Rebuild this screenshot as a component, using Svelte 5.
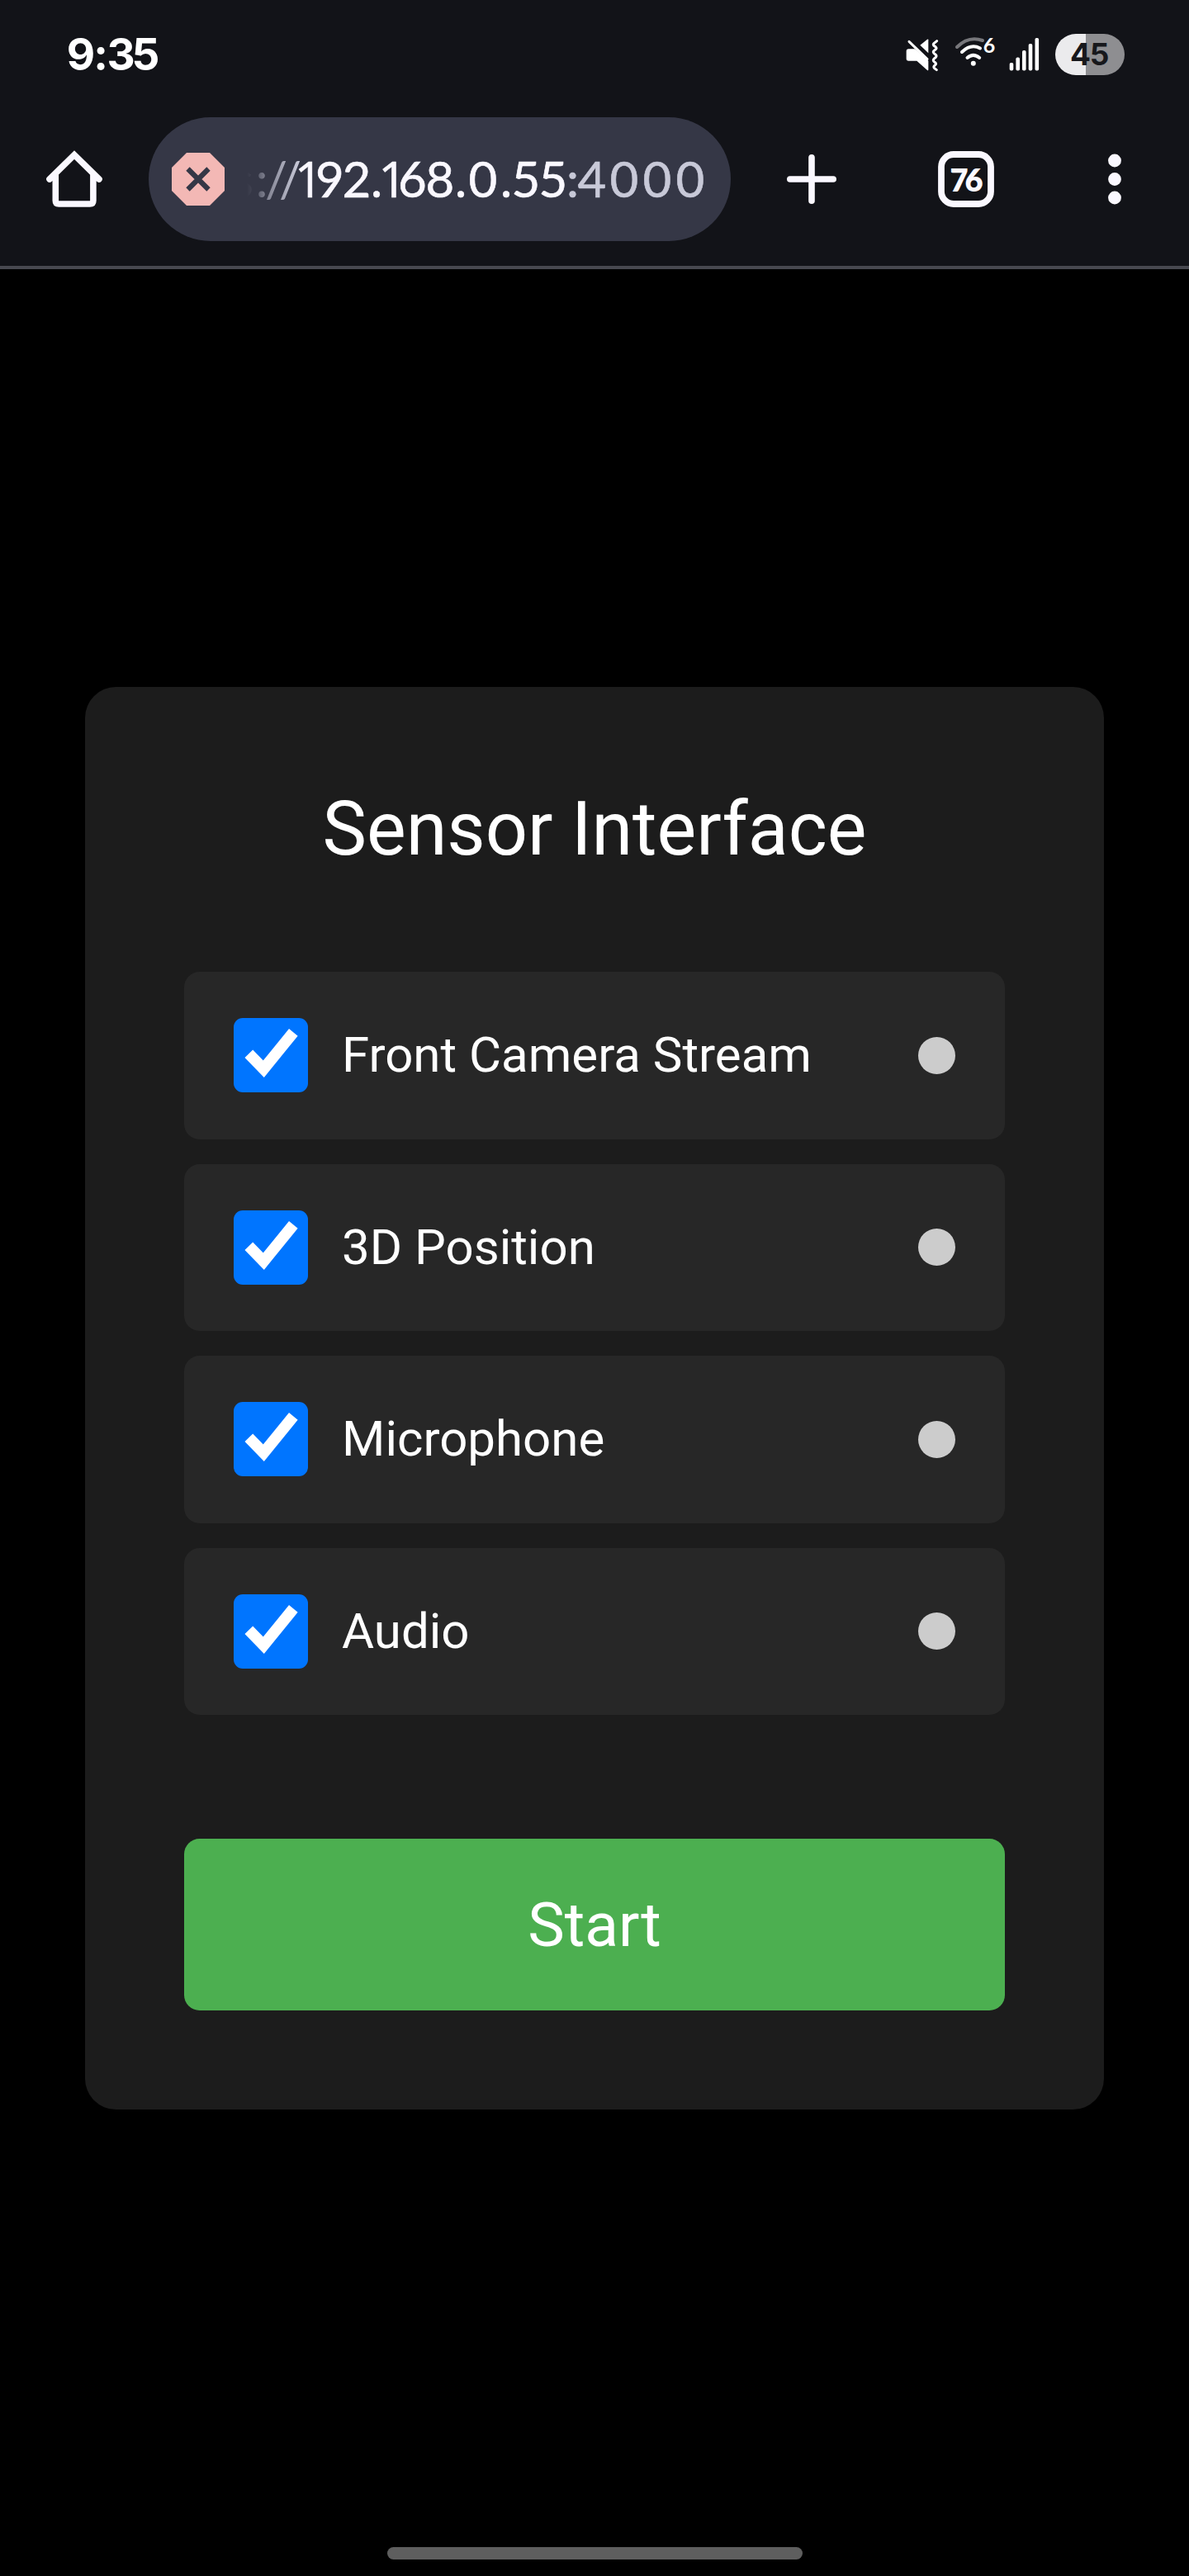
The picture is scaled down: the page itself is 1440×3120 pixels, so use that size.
<script>
  const sensors = ['Front Camera Stream', '3D Position', 'Microphone', 'Audio'];
  const signalBars = [
    { x: 3, top: 35 },
    { x: 10.7, top: 28.5 },
    { x: 18.3, top: 20 },
    { x: 26, top: 12 },
    { x: 33.8, top: 5 }
  ];
</script>

<div class="screen">
  <header>
    <div class="status">
      <svg class="clock" width="120" height="60" viewBox="76 36 120 60">
        <text x="98 122 146.5 176.5" y="85.3">9:35</text>
      </svg>
      <div class="indicators">
        <svg class="mute" width="40" height="42" viewBox="52 44 120 126">
          <path d="M62 87H84L92 92L134 130V162Q134 167 130 164L92 130H62Q54 130 54 122V95Q54 87 62 87Z" fill="#fff" />
          <path d="M104 73L130 52Q134 50 134 54V102Z" fill="#fff" />
          <path d="M64 60L130 124" class="line" />
          <path d="M165 58L154 67Q150 71 154 75L161 80Q165 84 161 88L154 94Q150 98 154 102L161 108Q165 112 161 117L154 123Q150 128 154 132L160 137Q164 141 159 145L155 149Q152 153 156 157L164 163" class="line" />
        </svg>
        <svg class="wifi" width="50" height="42" viewBox="1156 42 50 42">
          <path d="M1159 57Q1173 43 1190 49" stroke="#77777b" class="arc" />
          <path d="M1165 63Q1176 52.5 1187 58.5" stroke="#fff" class="arc" />
          <path d="M1171.5 70Q1178.8 63.6 1186.2 70" stroke="#fff" class="arc" />
          <circle cx="1178.8" cy="76.8" r="3" fill="#fff" />
          <text x="1198" y="64.3">6</text>
        </svg>
        <svg class="signal" width="38" height="42" viewBox="0 3 38 42">
          {#each signalBars as bar}
            <rect x={bar.x - 2.3} y={bar.top} width="4.6" height={44.5 - bar.top} rx="1.8" fill="#fff" />
          {/each}
        </svg>
        <div class="battery">
          <svg width="84" height="50" viewBox="1278 41 84 50">
            <text x="1308.5 1331.5" y="79.4">45</text>
          </svg>
        </div>
      </div>
    </div>

    <div class="toolbar">
      <svg class="home" width="72" height="72" viewBox="54 181 72 72">
        <path d="M60 217L90 187.5L120 217M67.3 212V243Q67.3 247 71.3 247H108.9Q112.9 247 112.9 243V212" fill="none" stroke="#faf8ff" stroke-width="7.6" stroke-linecap="round" />
      </svg>
      <div class="address">
        <svg width="705" height="150" viewBox="180 142 705 150">
          <defs>
            <linearGradient id="fade" gradientUnits="userSpaceOnUse" x1="299" y1="0" x2="362" y2="0">
              <stop offset="0" stop-color="#c8c9d8" stop-opacity="0" />
              <stop offset="0.12" stop-color="#c8c9d8" stop-opacity="0.1" />
              <stop offset="0.35" stop-color="#c8c9d8" stop-opacity="0.5" />
              <stop offset="1" stop-color="#c8c9d8" />
            </linearGradient>
          </defs>
          <path d="M226 185H254L272 203V231L254 249H226L208 231V203Z" fill="#f3b8b5" />
          <path d="M227.5 204.5L252.5 229.5M252.5 204.5L227.5 229.5" stroke="#353746" stroke-width="6.2" />
          <text y="239"><tspan fill="url(#fade)" x="294 317 334.5 351.5">s://</tspan><tspan class="host one" x="374">1</tspan><tspan class="host" x="399.5 432 456">92.</tspan><tspan class="host one" x="475.5">1</tspan><tspan class="host" x="499.5 533 558 585 613 637 670">68.0.55</tspan><tspan class="port" x="693.5 717 756 796 836">:4000</tspan></text>
        </svg>
      </div>
      <svg class="plus" width="68" height="68" viewBox="0 0 68 68">
        <path d="M34 7.8V60.2M7.8 34H60.2" stroke="#faf8ff" stroke-width="7.6" stroke-linecap="round" />
      </svg>
      <svg class="tabs" width="68" height="68" viewBox="1136 183 68 68">
        <rect x="1140" y="187" width="60" height="60" rx="15" fill="none" stroke="#faf8ff" stroke-width="7.8" />
        <text x="1161.5 1179.5" y="231.5">76</text>
      </svg>
      <svg class="menu" width="20" height="68" viewBox="0 0 20 68">
        <circle cx="10" cy="11.5" r="7.9" />
        <circle cx="10" cy="34" r="7.9" />
        <circle cx="10" cy="56.5" r="7.9" />
      </svg>
    </div>
  </header>

  <main>
    <section class="card">
      <h1>Sensor Interface</h1>
      <div class="list">
        {#each sensors as name}
          <label class="row">
            <span class="check">
              <svg width="90" height="90" viewBox="0 0 270 270">
                <path d="M55 130L109 185L217 52" fill="none" stroke="#fff" stroke-width="41" />
              </svg>
            </span>
            <span class="name">{name}</span>
            <span class="dot"></span>
          </label>
        {/each}
      </div>
      <button>Start</button>
    </section>
  </main>

  <footer><div class="handle"></div></footer>
</div>

<style>
  :global(body) {
    margin: 0;
    background: #000;
  }
  .screen {
    width: 1440px;
    height: 3120px;
    display: flex;
    flex-direction: column;
    background: #000;
    color: #fff;
    font-family: Roboto, sans-serif;
    overflow: hidden;
  }
  svg {
    display: block;
    flex: none;
    overflow: visible;
  }
  svg text {
    text-anchor: middle;
  }
  header {
    box-sizing: border-box;
    height: 326px;
    background: #121318;
    border-bottom: 4px solid #47484f;
  }
  .status {
    box-sizing: border-box;
    height: 142px;
    padding: 36px 78px 0 76px;
    display: flex;
    justify-content: space-between;
    align-items: flex-start;
  }
  .clock text {
    font: 700 53px Inter, sans-serif;
    fill: #fff;
  }
  .indicators {
    display: flex;
    height: 60px;
    align-items: center;
  }
  .mute {
    margin-right: 19px;
  }
  .wifi {
    margin: 0 16px 6px 0;
  }
  .wifi text {
    font: 700 25px Lato, sans-serif;
    fill: #fff;
  }
  .signal {
    margin: 0 18px 2px 0;
  }
  .line {
    fill: none;
    stroke: #fff;
    stroke-width: 9;
    stroke-linecap: round;
  }
  .arc {
    fill: none;
    stroke-width: 4;
    stroke-linecap: round;
  }
  .battery {
    width: 84px;
    height: 50px;
    border-radius: 25px;
    background: linear-gradient(90deg, #ebebed 37.5px, #8e8e91 37.5px);
  }
  .battery text {
    font: 700 37px Inter, sans-serif;
    fill: #17181c;
  }
  .toolbar {
    height: 150px;
    padding-left: 54px;
    display: flex;
    align-items: center;
  }
  .address {
    margin: 0 64px 0 54px;
    width: 705px;
    height: 150px;
    border-radius: 75px;
    background: #353746;
  }
  .address text {
    font: 400 60px Lato, sans-serif;
  }
  .host {
    fill: #faf8ff;
    stroke: #faf8ff;
    stroke-width: 0.6;
  }
  .one {
    font-family: 'Open Sans', sans-serif;
  }
  .port {
    fill: #c8c9d8;
    stroke: #c8c9d8;
    stroke-width: 0.6;
  }
  .tabs {
    margin: 0 136px 0 119px;
  }
  .tabs text {
    font: 800 38px Lato, sans-serif;
    fill: #faf8ff;
  }
  .menu {
    fill: #faf8ff;
  }
  main {
    flex: 1;
    display: flex;
    justify-content: center;
    align-items: flex-start;
    padding-top: 506px;
  }
  .card {
    box-sizing: border-box;
    width: 1234px;
    height: 1723px;
    padding: 120px;
    border-radius: 37.5px;
    background: #1c1c1c;
    display: flex;
    flex-direction: column;
  }
  h1 {
    margin: 0 0 120px;
    font-size: 90px;
    font-weight: 400;
    line-height: 105px;
    text-align: center;
  }
  .list {
    display: flex;
    flex-direction: column;
    gap: 30px;
  }
  .row {
    box-sizing: border-box;
    height: 202.5px;
    padding: 0 60px;
    display: flex;
    align-items: center;
    border-radius: 18.75px;
    background: #272727;
    font-size: 60px;
  }
  .check {
    width: 90px;
    height: 90px;
    border-radius: 11px;
    background: #0075ff;
  }
  .name {
    flex: 1;
    margin-left: 41px;
    line-height: 70px;
  }
  .dot {
    width: 45px;
    height: 45px;
    border-radius: 50%;
    background: #ccc;
  }
  button {
    height: 208px;
    margin: 150px 0 0;
    padding: 0;
    border: 0;
    border-radius: 18.75px;
    background: #4caf50;
    color: #fff;
    font: 400 75px Roboto, sans-serif;
  }
  footer {
    height: 35px;
    display: flex;
    justify-content: center;
    align-items: flex-start;
  }
  .handle {
    width: 503px;
    height: 15px;
    border-radius: 8px;
    background: #5e5e5e;
  }
</style>
